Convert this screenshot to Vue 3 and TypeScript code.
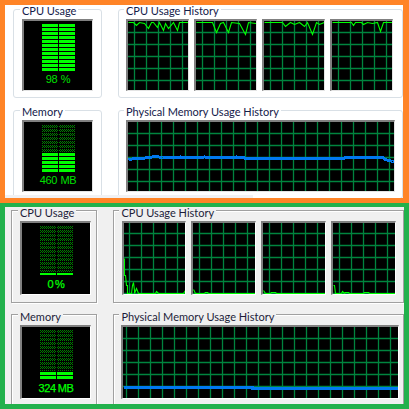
<script setup lang="ts">
interface Meter {
  title: string
  value: string
  lit: number
  height: number
  baseline?: boolean
}

interface Graph {
  width: number
  height: number
  offsetX: number
  offsetY: number
  kind: 'cpu' | 'memory'
  trace: number[][]
}

interface Row {
  meter: Meter
  historyTitle: string
  graphs: Graph[]
}

interface Panel {
  name: string
  rows: Row[]
}

const topCpuTraces = [
  [[0, 1], [5, 1], [8, 4], [11, 1], [16, 2], [20, 7], [23, 1], [25, 1], [29, 6], [31, 1], [35, 9], [37, 2], [40, 7], [45, 1], [49, 9], [51, 1], [61, 1]],
  [[0, 1], [10, 1], [16, 1], [20, 11], [24, 2], [27, 1], [32, 11], [35, 1], [43, 2], [49, 13], [52, 1], [60, 2]],
  [[0, 1], [18, 1], [21, 5], [26, 1], [30, 3], [35, 1], [40, 5], [43, 1], [48, 13], [52, 1], [55, 3], [60, 1]],
  [[0, 1], [19, 1], [21, 4], [23, 1], [29, 1], [31, 3], [35, 1], [40, 2], [45, 1], [48, 10], [51, 1], [60, 1]],
]

const bottomCpuTraces = [
  [[0, 35], [0, 52], [1, 52], [2, 62], [3, 62], [3, 70], [7, 70], [8, 62], [9, 59], [10, 67], [10, 70], [12, 65], [14, 70], [31, 70], [32, 68], [34, 70], [59, 70], [61, 67], [62, 70]],
  [[0, 66], [2, 70], [11, 70], [12, 69], [14, 69], [15, 70], [62, 70]],
  [[0, 67], [2, 70], [7, 70], [8, 69], [12, 69], [13, 70], [62, 70]],
  [[0, 62], [1, 62], [2, 70], [8, 70], [9, 68], [11, 70], [12, 69], [15, 69], [16, 70], [30, 70], [31, 69], [35, 69], [36, 70], [62, 70]],
]

const panels: Panel[] = [
  {
    name: 'aero',
    rows: [
      {
        meter: { title: 'CPU Usage', value: '98 %', lit: 12, height: 47 },
        historyTitle: 'CPU Usage History',
        graphs: topCpuTraces.map((trace) => ({ width: 60, height: 69, offsetX: 6, offsetY: 11, kind: 'cpu', trace })),
      },
      {
        meter: { title: 'Memory', value: '460 MB', lit: 5, height: 47 },
        historyTitle: 'Physical Memory Usage History',
        graphs: [
          {
            width: 266,
            height: 69,
            offsetX: 9,
            offsetY: 11,
            kind: 'memory',
            trace: [[0, 37], [7, 36], [17, 35.5], [27, 34], [34, 35], [52, 34.5], [60, 35.5], [76, 34.5], [96, 35], [108, 34.5], [116, 35.5], [216, 35.5], [217, 34.5], [253, 34.5], [257, 37], [264, 39], [266, 39]],
          },
        ],
      },
    ],
  },
  {
    name: 'classic',
    rows: [
      {
        meter: { title: 'CPU Usage', value: '0 %', lit: 0, height: 49, baseline: true },
        historyTitle: 'CPU Usage History',
        graphs: bottomCpuTraces.map((trace, index) => ({
          width: index === 0 ? 61 : 62,
          height: 71,
          offsetX: index === 0 ? 5 : 6,
          offsetY: 10,
          kind: 'cpu',
          trace,
        })),
      },
      {
        meter: { title: 'Memory', value: '324 MB', lit: 2, height: 49 },
        historyTitle: 'Physical Memory Usage History',
        graphs: [
          {
            width: 275,
            height: 71,
            offsetX: 3,
            offsetY: 11,
            kind: 'memory',
            trace: [[0, 60], [129, 60], [129, 61], [275, 61]],
          },
        ],
      },
    ],
  },
]

const COLUMN = 16
const PITCH = 4

function gridX(graph: Graph): number[] {
  const lines: number[] = []
  for (let x = graph.offsetX; x < graph.width; x += 12) lines.push(x + 0.5)
  return lines
}

function gridY(graph: Graph): number[] {
  const lines: number[] = []
  for (let y = graph.offsetY; y < graph.height; y += 12) lines.push(y + 0.5)
  return lines
}

function points(graph: Graph): string {
  return graph.trace.map(([x, y]) => `${x + 0.5},${y + 0.5}`).join(' ')
}

function litRows(meter: Meter): number[] {
  const rows: number[] = []
  for (let i = 0; i < meter.lit; i++) rows.push(meter.height - 3 - i * PITCH)
  return rows
}

function dimHeight(meter: Meter): number {
  return meter.height - meter.lit * PITCH - (meter.baseline ? 3 : 0)
}

function patternId(panel: Panel, meter: Meter): string {
  return `dim-${panel.name}-${meter.title.replace(' ', '')}`
}
</script>

<template>
  <div class="shot">
    <section v-for="panel in panels" :key="panel.name" class="panel" :class="`panel--${panel.name}`">
      <div v-for="row in panel.rows" :key="row.meter.title" class="panel__row">
        <div class="group group--meter">
          <span class="group__title">{{ row.meter.title }}</span>
          <div class="screen screen--meter">
            <svg width="33" :height="row.meter.height" class="meter">
              <defs>
                <pattern :id="patternId(panel, row.meter)" width="2" height="4" patternUnits="userSpaceOnUse">
                  <rect x="0" y="0" width="1" height="1" fill="#007d00" />
                  <rect x="1" y="1" width="1" height="1" fill="#007d00" />
                  <rect x="0" y="2" width="1" height="1" fill="#007d00" />
                </pattern>
              </defs>
              <g v-for="col in [0, COLUMN + 1]" :key="col">
                <rect :x="col" y="0" :width="COLUMN" :height="dimHeight(row.meter)" :fill="`url(#${patternId(panel, row.meter)})`" />
                <rect v-for="y in litRows(row.meter)" :key="y" :x="col" :y="y" :width="COLUMN" height="3" fill="#00ff00" />
                <rect v-if="row.meter.baseline" :x="col" :y="row.meter.height - 2" :width="COLUMN" height="2" fill="#00ff00" />
              </g>
            </svg>
            <span class="screen__value">{{ row.meter.value }}</span>
          </div>
        </div>

        <div class="group group--history">
          <span class="group__title">{{ row.historyTitle }}</span>
          <div class="graphs">
            <div v-for="(graph, index) in row.graphs" :key="index" class="screen">
              <svg :width="graph.width" :height="graph.height" class="graph">
                <line v-for="x in gridX(graph)" :key="x" :x1="x" :x2="x" y1="0" :y2="graph.height" />
                <line v-for="y in gridY(graph)" :key="y" x1="0" :x2="graph.width" :y1="y" :y2="y" />
                <polyline :class="`graph__${graph.kind}`" :points="points(graph)" />
              </svg>
            </div>
          </div>
        </div>
      </div>
      <div class="panel__strip"></div>
    </section>
  </div>
</template>

<style scoped>
.shot {
  display: flex;
  flex-direction: column;
  width: 409px;
  height: 409px;
  font-family: Lato, "Liberation Sans", sans-serif;
  font-size: 11px;
}

.panel {
  display: flex;
  flex-direction: column;
  box-sizing: border-box;
  overflow: hidden;
}

.panel--aero {
  height: 203px;
  border: solid #ff8427;
  border-width: 5px 6px 5px 5px;
  background: #fff;
  padding: 4px 0 0 8px;
  gap: 12px;
  position: relative;
}

.panel--classic {
  height: 206px;
  border: solid #22b14c;
  border-width: 4px 5px 5px 5px;
  background: #f0f0f0;
  padding: 3px 0 0 6px;
  gap: 11px;
}

.panel__row {
  display: flex;
  gap: 16px;
  flex: 0 0 auto;
}

.panel__strip {
  display: none;
}

.panel--aero .panel__strip {
  display: block;
  position: absolute;
  left: 0;
  bottom: 0;
  width: 248px;
  height: 3px;
  background: #f1f1f3;
}

.group {
  position: relative;
  box-sizing: border-box;
  border: 1px solid #d9e0e6;
  border-radius: 3px;
  padding: 9px 0 0 8px;
}

.panel--classic .group {
  border-color: #a0a0a0;
  border-radius: 0;
  box-shadow: inset 1px 1px 0 #fff, 1px 1px 0 #fff;
  padding: 10px 0 0 8px;
}

.group--meter {
  width: 89px;
  height: 89px;
}

.panel--classic .group--meter {
  height: 93px;
}

.group--history {
  width: 285px;
  height: 89px;
  padding-left: 7px;
}

.panel--classic .group--history {
  width: 300px;
  height: 93px;
}

.panel--classic .panel__row + .panel__row .group--history {
  padding-left: 7px;
}

.group__title {
  position: absolute;
  left: 6px;
  top: -8px;
  padding: 0 2px;
  background: #fff;
  color: #14204a;
  line-height: 17px;
  white-space: nowrap;
}

.group--history .group__title {
  left: 5px;
}

.panel--classic .group__title {
  top: -7px;
  background: #f0f0f0;
  color: #1d1d3a;
}

.graphs {
  display: flex;
  gap: 5px;
}

.screen {
  flex: 0 0 auto;
  display: inline-block;
  vertical-align: top;
  background: #000;
  border: solid;
  border-width: 2px 1px 1px 2px;
  border-color: #808080 #e4e4e4 #e4e4e4 #808080;
  line-height: 0;
}

.panel--classic .screen {
  border-color: #808080 #fff #fff #808080;
}

.screen--meter {
  display: flex;
  flex-direction: column;
  align-items: center;
  box-sizing: border-box;
  width: 71px;
  height: 72px;
  padding-top: 3px;
}

.panel--classic .screen--meter {
  height: 74px;
}

.meter {
  display: block;
}

.graph {
  display: block;
}

.graph line {
  stroke: #00843f;
  stroke-width: 1.3;
}

.graph polyline {
  fill: none;
}

.graph__cpu {
  stroke: #00ff00;
  stroke-width: 1.1;
}

.graph__memory {
  stroke: #0078f0;
  stroke-width: 3;
  shape-rendering: crispEdges;
}

.screen__value {
  margin-top: 2px;
  font-family: "Liberation Sans", Arial, sans-serif;
  font-size: 11px;
  letter-spacing: -0.4px;
  word-spacing: 1px;
  line-height: 13px;
  color: #00e000;
  white-space: nowrap;
}

.panel--classic .screen__value {
  margin-top: 3px;
  color: #00ff00;
  letter-spacing: -0.3px;
  word-spacing: -1px;
  -webkit-text-stroke: 0.25px #00ff00;
}
</style>
